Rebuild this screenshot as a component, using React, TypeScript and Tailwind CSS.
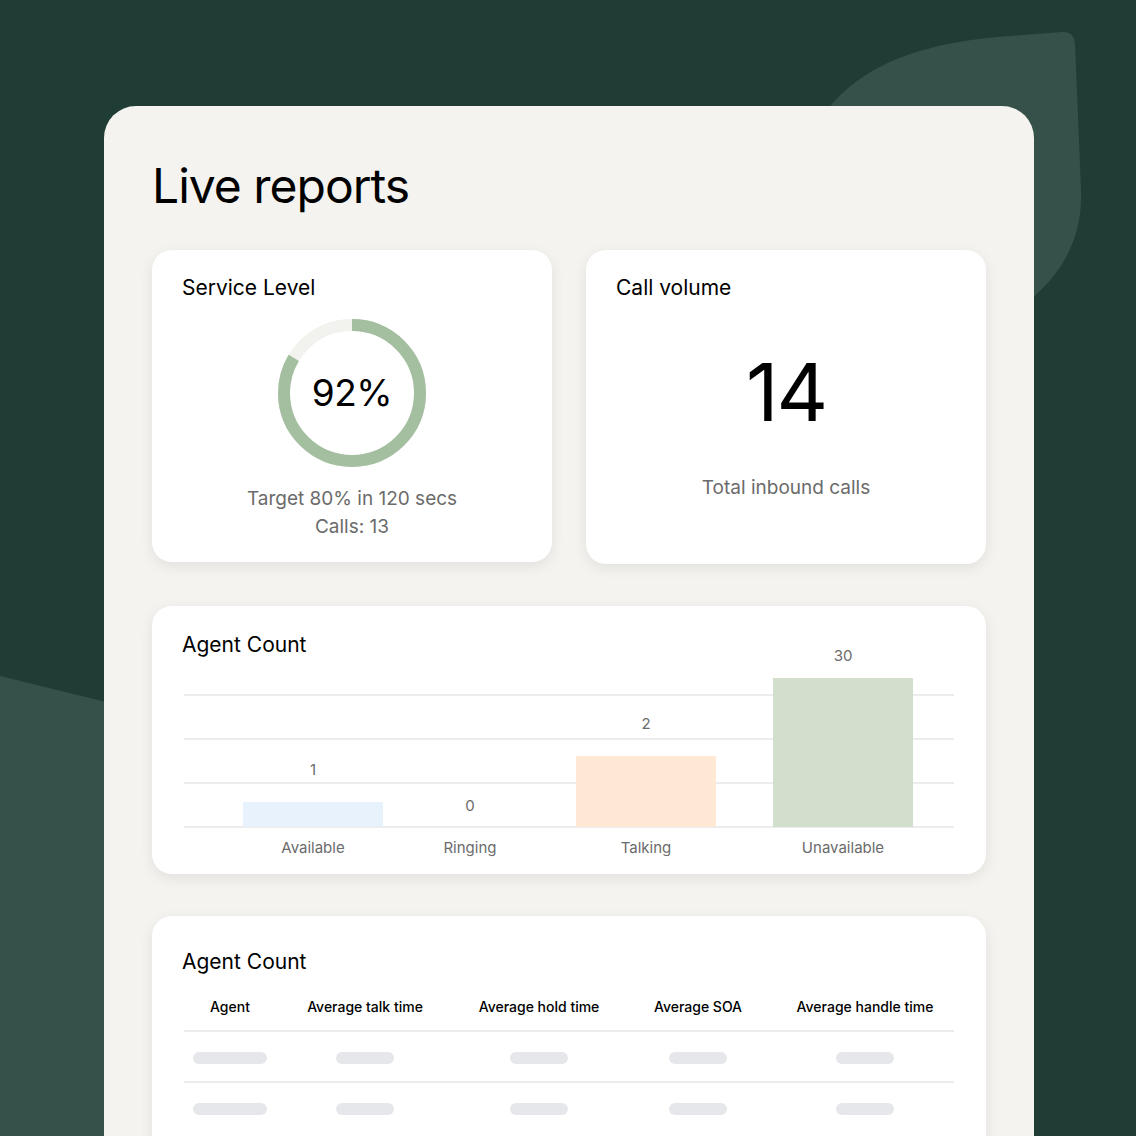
import React from 'react'

const font = { fontFamily: 'Inter, "Noto Sans", sans-serif' }

const bars = [
  { label: 'Available', value: 1, center: 313, height: 25, gap: 'mb-[23px]', color: 'bg-[#e8f2fd]' },
  { label: 'Ringing', value: 0, center: 470, height: 0, gap: 'mb-[12px]', color: 'bg-transparent' },
  { label: 'Talking', value: 2, center: 646, height: 71, gap: 'mb-[23px]', color: 'bg-[#ffe8d4]' },
  { label: 'Unavailable', value: 30, center: 843, height: 149, gap: 'mb-[13px]', color: 'bg-[#d2dfcd]' },
]

const columns = [
  { title: 'Agent', w: 'w-[74px]' },
  { title: 'Average talk time', w: 'w-[58px]' },
  { title: 'Average hold time', w: 'w-[58px]' },
  { title: 'Average SOA', w: 'w-[58px]' },
  { title: 'Average handle time', w: 'w-[58px]' },
]

function Card({ className = '', children }: { className?: string; children: React.ReactNode }) {
  return (
    <div className={`rounded-[20px] bg-white shadow-[0_4px_14px_rgba(0,0,0,0.08)] ${className}`}>{children}</div>
  )
}

function Donut() {
  const r = 68
  const c = 2 * Math.PI * r
  const pct = 0.835
  return (
    <div className="relative h-[152px] w-[152px]">
      <svg width="152" height="152" viewBox="0 0 152 152" className="-rotate-90">
        <circle cx="76" cy="76" r={r} fill="none" stroke="#f2f2ee" strokeWidth="12" />
        <circle
          cx="76"
          cy="76"
          r={r}
          fill="none"
          stroke="#a3bf9f"
          strokeWidth="12"
          strokeDasharray={`${c * pct} ${c}`}
        />
      </svg>
      <div className="absolute inset-0 flex items-center justify-center text-[37px] tracking-[-0.5px] text-black">
        92%
      </div>
    </div>
  )
}

function AgentChart() {
  // baseline sits 161px below the top of the plot area
  return (
    <div className="relative mx-8 mt-[5px] h-[196px]">
      <div className="absolute left-0 right-0 top-[28px] flex h-[134px] flex-col justify-between">
        {[0, 1, 2, 3].map((i) => (
          <div key={i} className="h-[2px] bg-[#ececec]" />
        ))}
      </div>
      {bars.map((b) => (
        <div
          key={b.label}
          className="absolute top-0 flex w-[140px] flex-col items-center"
          style={{ left: b.center - 184 - 70 }}
        >
          <div className="flex h-[161px] w-full flex-col items-center justify-end">
            <span className={`shrink-0 text-[15px] leading-[18px] text-[#6b6b6b] ${b.gap}`}>{b.value}</span>
            <div className={`w-full shrink-0 ${b.color}`} style={{ height: b.height }} />
          </div>
          <span className="mt-[12px] text-[15px] leading-[18px] text-[#6b6b6b]">{b.label}</span>
        </div>
      ))}
    </div>
  )
}

export default function App() {
  return (
    <div className="relative h-[1136px] w-[1136px] overflow-hidden bg-[#1f3d35]" style={font}>
      {/* background leaves */}
      <svg className="absolute inset-0" width="1136" height="1136" viewBox="0 0 1136 1136">
        <path
          d="M820 120 C860 60 930 42 1010 36 L1062 32 Q1074 31 1075 44 L1081 190 C1083 240 1060 275 1030 300 L820 300 Z"
          fill="#35514a"
        />
        <path d="M0 676 L110 703 L110 1136 L0 1136 Z" fill="#35514a" />
      </svg>

      <div className="relative ml-[104px] mt-[106px] w-[930px] rounded-[32px] bg-[#f4f3ef] px-12 pb-20 pt-[50px] text-black">
        <h1 className="text-[48px] leading-[60px] tracking-[-1px]">Live reports</h1>

        <div className="mt-[34px] grid grid-cols-2 gap-[34px]">
          <Card className="flex h-[312px] flex-col items-center px-[30px] pt-[22px]">
            <div className="self-start text-[21px]">Service Level</div>
            <div className="mt-[13px]">
              <Donut />
            </div>
            <div className="mt-[16px] text-center text-[19px] leading-[28px] text-[#6b6b6b]">
              <div>Target 80% in 120 secs</div>
              <div>Calls: 13</div>
            </div>
          </Card>
          <Card className="flex h-[314px] flex-col items-center px-[30px] pt-[22px]">
            <div className="self-start text-[21px]">Call volume</div>
            <div className="mt-[40px] text-[80px] leading-[96px] tracking-[-2px]">14</div>
            <div className="mt-[34px] text-[19px] text-[#6b6b6b]">Total inbound calls</div>
          </Card>
        </div>

        <Card className="mt-[42px] h-[268px] pt-[23px]">
          <div className="px-[30px] text-[21px]">Agent Count</div>
          <AgentChart />
        </Card>

        <Card className="mt-[42px] pb-10 pt-[30px]">
          <div className="px-[30px] text-[21px]">Agent Count</div>
          <div className="mx-8 mt-[18px]">
            <div className="grid grid-cols-[92px_178px_170px_148px_186px] border-b-2 border-[#ececec] pb-[13px] text-[14px] font-medium">
              {columns.map((c) => (
                <div key={c.title} className="text-center">
                  {c.title}
                </div>
              ))}
            </div>
            {[0, 1].map((row) => (
              <div
                key={row}
                className={`grid h-[51px] grid-cols-[92px_178px_170px_148px_186px] items-center ${row === 0 ? 'border-b-2 border-[#ececec] pt-[3px]' : 'pt-[2px]'}`}
              >
                {columns.map((c) => (
                  <div key={c.title} className="flex justify-center">
                    <div className={`h-[12px] rounded-full bg-[#e6e7ea] ${c.w}`} />
                  </div>
                ))}
              </div>
            ))}
          </div>
        </Card>
      </div>
    </div>
  )
}
